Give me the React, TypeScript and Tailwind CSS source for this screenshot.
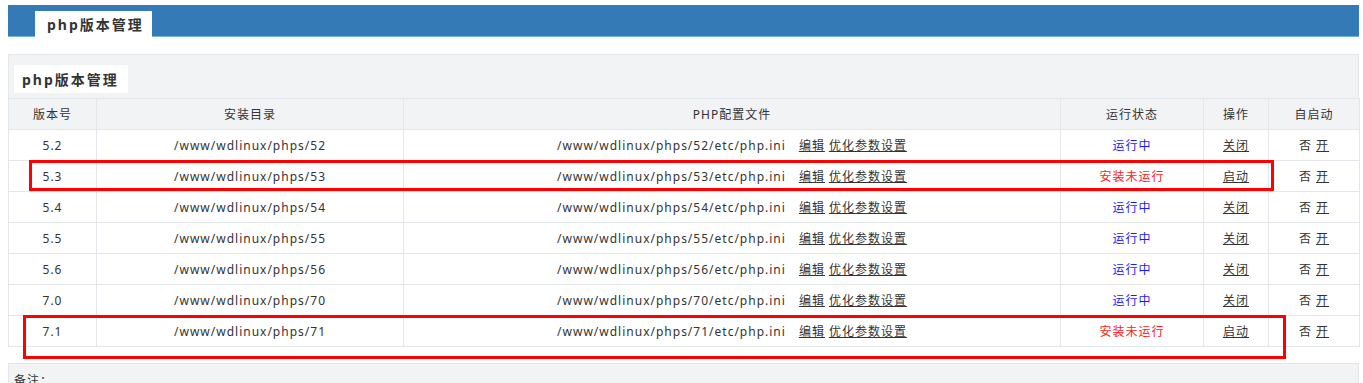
import React from "react";

interface PhpRow {
  ver: string;
  dir: string;
  running: boolean;
}

const rows: PhpRow[] = [
  { ver: "5.2", dir: "52", running: true },
  { ver: "5.3", dir: "53", running: false },
  { ver: "5.4", dir: "54", running: true },
  { ver: "5.5", dir: "55", running: true },
  { ver: "5.6", dir: "56", running: true },
  { ver: "7.0", dir: "70", running: true },
  { ver: "7.1", dir: "71", running: false },
];

const cell = "border border-[#e3e6ea] text-center align-middle p-0 pt-[2px]";

export default function App() {
  return (
    <div
      className="relative h-[383px] overflow-hidden bg-white px-2 pt-[5px] text-[12px] tracking-[1px] text-[#333]"
      style={{ fontFamily: '"Noto Sans", "Noto Sans CJK SC", sans-serif' }}
    >
      {/* top bar */}
      <div className="h-[32px] bg-[#337ab7] border-b border-[#6fb3e0] pl-[27px] pt-[6px] w-[1351px]">
        <div className="h-[26px] w-[117px] bg-white flex items-center pl-[12px] pt-px font-bold text-[14px] tracking-[2px] text-[#333]">
          php版本管理
        </div>
      </div>

      {/* panel */}
      <div className="mt-[17px] w-[1351px] bg-[#f2f3f5] border-t border-x border-[#e3e6ea]">
        <div className="pl-[5px] pt-[10px] pb-[5px]">
          <div className="h-[28px] w-[114px] bg-white flex items-center pl-[8px] pt-px font-bold text-[14px] tracking-[2px] text-[#333]">
            php版本管理
          </div>
        </div>
        <table className="w-[1351px] -ml-px border-collapse table-fixed">
          <colgroup>
            <col className="w-[88px]" />
            <col className="w-[307px]" />
            <col className="w-[657px]" />
            <col className="w-[143px]" />
            <col className="w-[65px]" />
            <col className="w-[91px]" />
          </colgroup>
          <thead>
            <tr className="h-[31px] bg-[#f2f3f5]">
              <th className={cell + " font-normal"}>版本号</th>
              <th className={cell + " font-normal"}>安装目录</th>
              <th className={cell + " font-normal"}>PHP配置文件</th>
              <th className={cell + " font-normal"}>运行状态</th>
              <th className={cell + " font-normal"}>操作</th>
              <th className={cell + " font-normal"}>自启动</th>
            </tr>
          </thead>
          <tbody className="bg-white">
            {rows.map((r) => (
              <tr key={r.ver} className="h-[31px]">
                <td className={cell}>{r.ver}</td>
                <td className={cell}>/www/wdlinux/phps/{r.dir}</td>
                <td className={cell}>
                  /www/wdlinux/phps/{r.dir}/etc/php.ini
                  <a className="underline ml-[13px] cursor-pointer">编辑</a>
                  <a className="underline ml-[4px] cursor-pointer">优化参数设置</a>
                </td>
                <td className={cell}>
                  {r.running ? (
                    <span className="text-[#1a1aff]">运行中</span>
                  ) : (
                    <span className="text-[#ff1a1a]">安装未运行</span>
                  )}
                </td>
                <td className={cell}>
                  <a className="underline cursor-pointer">{r.running ? "关闭" : "启动"}</a>
                </td>
                <td className={cell}>
                  否 <a className="underline cursor-pointer">开</a>
                </td>
              </tr>
            ))}
          </tbody>
        </table>
      </div>

      {/* notes panel */}
      <div className="mt-[16px] w-[1351px] h-[40px] bg-[#f2f3f5] border border-[#e3e6ea] pl-[5px] pt-[8px]">
        备注：
      </div>

      {/* red annotation boxes */}
      <div className="absolute left-[29px] top-[160px] w-[1245px] h-[31px] border-[3px] border-[#ff0000] pointer-events-none" />
      <div className="absolute left-[23px] top-[315px] w-[1263px] h-[44px] border-[3px] border-[#ff0000] pointer-events-none" />
    </div>
  );
}
